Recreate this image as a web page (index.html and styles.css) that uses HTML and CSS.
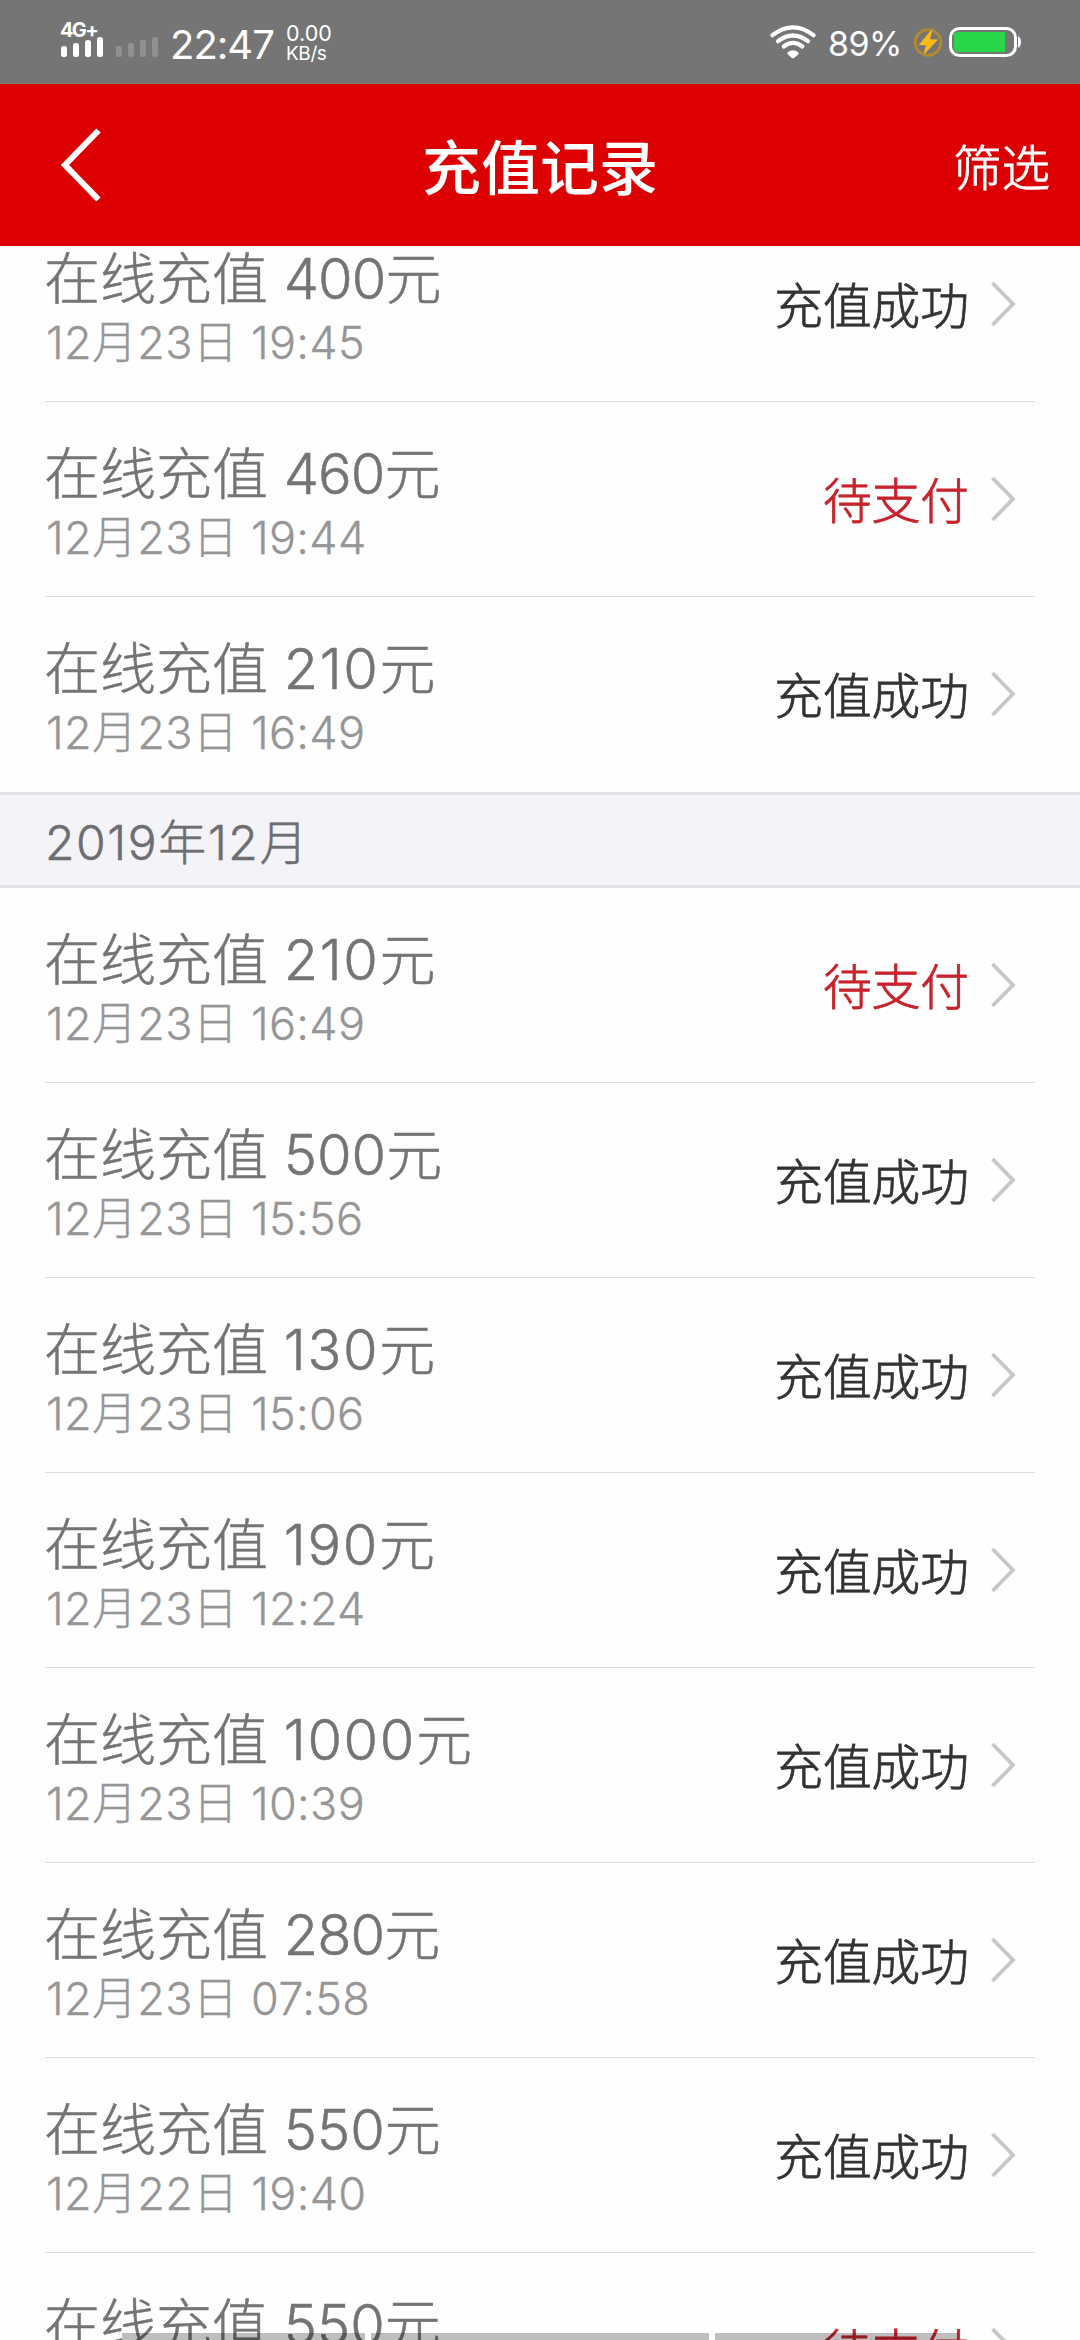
FILE: index.html
```html
<!DOCTYPE html>
<html lang="zh-CN">
<head>
<meta charset="utf-8">
<title>充值记录</title>
<link rel="stylesheet" href="styles.css">
</head>
<body>
<svg class="defs" width="0" height="0"><symbol id="chevron" viewBox="0 0 27 48"><path d="M2.5 3L23 24L2.5 45" fill="none" stroke="#c7c7c7" stroke-width="3.8"/></symbol></svg>
<div class="status-bar">
  <div class="signal">
    <span class="network">4G+</span>
    <svg width="98" height="20" viewBox="0 0 98 20"><g fill="#fff"><rect x="0" y="9" width="6" height="11" rx="2.5"/><rect x="12" y="6" width="6" height="14" rx="2.5"/><rect x="24" y="3" width="6" height="17" rx="2.5"/><rect x="36" y="0" width="6" height="20" rx="2.5"/></g><g fill="#919191"><rect x="55" y="9" width="6" height="11" rx="2"/><rect x="67" y="6" width="6" height="14" rx="2"/><rect x="79" y="3" width="6" height="17" rx="2"/><rect x="91" y="0" width="6" height="20" rx="2"/></g></svg>
  </div>
  <span class="clock">22:47</span>
  <div class="speed"><span class="rate">0.00</span><span class="unit">KB/s</span></div>
  <div class="indicators">
    <svg width="46" height="34" viewBox="0 0 46 34"><g fill="none" stroke="#fff" stroke-width="4.2" stroke-linecap="round"><path d="M2.5 10.2Q23-5.6 43.5 10.2"/><path d="M8 16.2Q23 4.8 38 16.2"/><path d="M13.7 21.5Q23 14.2 32.3 21.5"/></g><path d="M17.5 27.5Q23 23 28.5 27.5Q29 28.5 28 29.5L24.5 32.7Q23 34 21.5 32.7L18 29.5Q17 28.5 17.5 27.5Z" fill="#fff"/></svg>
    <span class="percent">89%</span>
    <svg class="bolt" width="30" height="30" viewBox="0 0 30 30"><circle cx="15" cy="15.5" r="12.8" fill="none" stroke="#b08a32" stroke-width="3"/><path d="M20.5-.5L5 18.5H12.5L9.5 29.5L26 12H17.5Z" fill="#fdb914" stroke="#777" stroke-width=".8"/></svg>
    <svg class="battery" width="73" height="30" viewBox="0 0 73 30"><rect x="1.5" y="1.5" width="65" height="27" rx="9" fill="none" stroke="#fff" stroke-width="3"/><path d="M9 5H56V25H9Q5 25 5 21V9Q5 5 9 5Z" fill="#27d748"/><path d="M69 9Q72 11 72 15Q72 19 69 21Z" fill="#fff"/></svg>
  </div>
</div>
<header class="nav">
  <svg class="back" width="42" height="76" viewBox="0 0 42 76"><path d="M38.5 3.5L5 38L38.5 72.5" fill="none" stroke="#fff" stroke-width="6"/></svg>
  <h1>充值记录</h1>
  <span class="filter">筛选</span>
</header>
<main class="records">
  <div class="scroll">
    <section>
      <article class="row"><div><div class="amount">在线充值 <span class="tight">400</span>元</div><div class="date">12月23日 19:45</div></div><span class="state">充值成功</span><svg class="arrow"><use href="#chevron"/></svg></article>
      <article class="row"><div><div class="amount">在线充值 <span class="tight">460</span>元</div><div class="date">12月23日 19:44</div></div><span class="state pending">待支付</span><svg class="arrow"><use href="#chevron"/></svg></article>
      <article class="row last"><div><div class="amount">在线充值 <span class="loose">210</span>元</div><div class="date">12月23日 16:49</div></div><span class="state">充值成功</span><svg class="arrow"><use href="#chevron"/></svg></article>
    </section>
    <h2>2019年12月</h2>
    <section>
      <article class="row"><div><div class="amount">在线充值 <span class="loose">210</span>元</div><div class="date">12月23日 16:49</div></div><span class="state pending">待支付</span><svg class="arrow"><use href="#chevron"/></svg></article>
      <article class="row"><div><div class="amount">在线充值 500元</div><div class="date">12月23日 15:56</div></div><span class="state">充值成功</span><svg class="arrow"><use href="#chevron"/></svg></article>
      <article class="row"><div><div class="amount">在线充值 <span class="loose">130</span>元</div><div class="date">12月23日 15:06</div></div><span class="state">充值成功</span><svg class="arrow"><use href="#chevron"/></svg></article>
      <article class="row"><div><div class="amount">在线充值 <span class="loose">190</span>元</div><div class="date">12月23日 12:24</div></div><span class="state">充值成功</span><svg class="arrow"><use href="#chevron"/></svg></article>
      <article class="row"><div><div class="amount">在线充值 <span class="loose">1000</span>元</div><div class="date">12月23日 10:39</div></div><span class="state">充值成功</span><svg class="arrow"><use href="#chevron"/></svg></article>
      <article class="row"><div><div class="amount">在线充值 <span class="tight">280</span>元</div><div class="date">12月23日 07:58</div></div><span class="state">充值成功</span><svg class="arrow"><use href="#chevron"/></svg></article>
      <article class="row"><div><div class="amount">在线充值 550元</div><div class="date">12月22日 19:40</div></div><span class="state">充值成功</span><svg class="arrow"><use href="#chevron"/></svg></article>
      <article class="row"><div><div class="amount">在线充值 550元</div></div><span class="state pending">待支付</span><svg class="arrow"><use href="#chevron"/></svg></article>
    </section>
  </div>
</main>
<div class="gesture-hints"><i></i><i></i><i></i></div>
</body>
</html>
```
FILE: styles.css
```css
* { box-sizing: border-box; }
body {
  margin: 0;
  width: 1080px;
  height: 2340px;
  overflow: hidden;
  display: flex;
  flex-direction: column;
  position: relative;
  background: #fefefe;
  font-family: Inter, "Noto Sans CJK SC", sans-serif;
  font-weight: 300;
}
svg { display: block; flex: none; }
.defs { position: absolute; }
.status-bar {
  height: 84px;
  flex: none;
  display: flex;
  align-items: flex-start;
  padding-left: 61px;
  background: #757575;
  color: #fff;
  font-weight: 400;
  white-space: nowrap;
}
.signal { width: 109px; padding-top: 20px; }
.network { display: block; height: 17px; line-height: 20px; font-size: 20px; font-weight: 700; letter-spacing: -1.7px; margin-left: -1px; }
.clock { width: 116px; padding-top: 21px; font-size: 40px; line-height: 48px; letter-spacing: -1px; }
.speed { display: flex; flex-direction: column; padding-top: 22px; font-size: 21.5px; line-height: 22px; }
.rate { height: 22px; }
.unit { font-size: 19px; line-height: 20px; letter-spacing: -.4px; }
.indicators { display: flex; margin-left: auto; width: 310px; padding-top: 25px; }
.percent { width: 83px; margin-left: 12px; font-size: 34px; line-height: 37px; letter-spacing: -.5px; }
.bolt { margin: 2px 6px 0 2px; }
.battery { margin-top: 2px; }
.nav {
  height: 162px;
  flex: none;
  display: grid;
  grid-template-columns: 270px 1fr 300px;
  align-items: center;
  padding: 0 30px 0 60px;
  background: #dc0000;
  color: #fff;
}
.nav h1 { margin: 0; padding-top: 8px; text-align: center; font-size: 59px; line-height: 80px; font-weight: 500; }
.filter { padding-top: 7px; text-align: right; font-size: 48.5px; font-weight: 300; line-height: 60px; -webkit-text-stroke: .8px; }
.records { flex: 1; min-height: 0; overflow: hidden; }
.scroll { margin-top: -39px; }
.row {
  height: 195px;
  margin: 0 45px;
  display: grid;
  grid-template-columns: 1fr auto 27px;
  column-gap: 21px;
  border-bottom: 1px solid #dedede;
  padding-right: 18px;
}
.row.last { border-bottom-color: transparent; }
.amount { margin: 34px 0 0 -1px; font-size: 56px; line-height: 76px; color: #747474; white-space: nowrap; -webkit-text-stroke: .5px; }
.tight { letter-spacing: -.9px; }
.loose { letter-spacing: 1.6px; }
.date { margin: -2px 0 0 1px; font-size: 45px; line-height: 56px; letter-spacing: .3px; color: #969696; white-space: nowrap; -webkit-text-stroke: .3px; }
.state { align-self: center; padding-top: 6px; font-size: 48.7px; line-height: 60px; color: #333; -webkit-text-stroke: .8px; }
.pending { color: #c8232c; }
.arrow { width: 27px; height: 48px; align-self: center; }
h2 {
  margin: 0;
  height: 96px;
  padding: 1px 0 0 45px;
  border: solid #e3e3e3;
  border-width: 3px 0;
  background: #f3f3f8;
  color: #6d6d72;
  font-size: 48px;
  font-weight: 300;
  line-height: 93px;
  letter-spacing: 1.6px;
  -webkit-text-stroke: .5px;
}
.gesture-hints { position: absolute; left: 122px; bottom: 0; width: 836px; height: 7px; display: grid; grid-template-columns: 243px 338px 243px; column-gap: 6px; }
.gesture-hints i { background: rgba(0, 0, 0, .25); }
```
